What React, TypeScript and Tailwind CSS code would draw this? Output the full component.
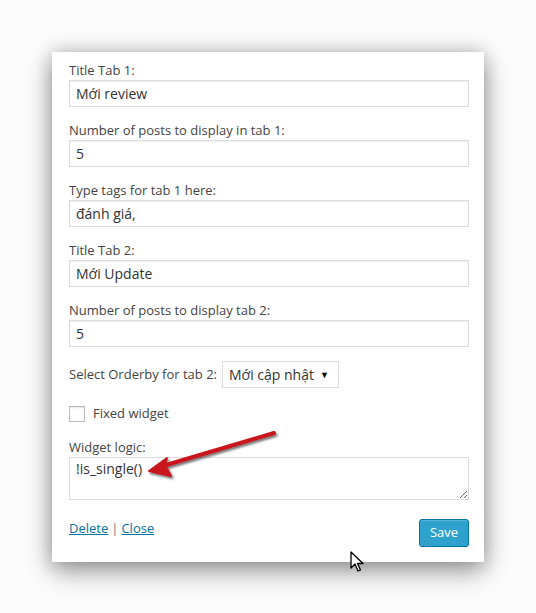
import React from "react";

const font = { fontFamily: '"Open Sans", "Noto Sans", sans-serif' };

function Field({ label, value }: { label: string; value: string }) {
  return (
    <div className="mb-[14px]">
      <div className="mb-[1px] text-[13px] leading-[18px] text-[#444]">{label}</div>
      <div className="flex h-[27px] items-center border border-[#ddd] px-[6px] text-[14px] text-[#333] shadow-[inset_0_1px_2px_rgba(0,0,0,0.07)]">
        {value}
      </div>
    </div>
  );
}

function RedArrow() {
  return (
    <svg
      className="pointer-events-none absolute left-[140px] top-[424px]"
      width="145"
      height="60"
      viewBox="0 0 145 60"
    >
      <defs>
        <filter id="sh" x="-20%" y="-40%" width="140%" height="180%">
          <feDropShadow dx="1.5" dy="2" stdDeviation="1.2" floodColor="#000" floodOpacity="0.55" />
        </filter>
      </defs>
      <g filter="url(#sh)">
        <path d="M134 9 L26 41" stroke="#c8141e" strokeWidth="4" strokeLinecap="round" />
        <path d="M9 47 L27 34 L25 41 L31 52 Z" fill="#c8141e" stroke="#c8141e" strokeWidth="2" strokeLinejoin="round" />
      </g>
    </svg>
  );
}

function Cursor() {
  return (
    <svg className="pointer-events-none absolute left-[350px] top-[551px]" width="14" height="22" viewBox="0 0 14 22">
      <path
        d="M1 1 L1 17 L5 13 L8 20 L10.5 19 L7.5 12.5 L13 12.5 Z"
        fill="#fff"
        stroke="#000"
        strokeWidth="1.3"
        strokeLinejoin="round"
      />
    </svg>
  );
}

export default function App() {
  return (
    <div className="relative h-[613px] w-[536px] overflow-hidden bg-[#fcfcfc]" style={font}>
      <div className="pl-[52px] pt-[52px]">
        <div className="w-[432px] bg-white pb-[15px] pl-[17px] pr-[15px] pt-[9px] shadow-[0_0_18px_rgba(0,0,0,0.22),0_10px_24px_rgba(0,0,0,0.35)]">
          <Field label="Title Tab 1:" value="Mới review" />
          <Field label="Number of posts to display in tab 1:" value="5" />
          <Field label="Type tags for tab 1 here:" value="đánh giá," />
          <Field label="Title Tab 2:" value="Mới Update" />
          <Field label="Number of posts to display tab 2:" value="5" />

          {/* orderby */}
          <div className="flex items-center gap-[5px]">
            <span className="text-[13px] text-[#444]">Select Orderby for tab 2:</span>
            <div className="flex h-[27px] w-[117px] items-center justify-between border border-[#ddd] pl-[6px] pr-[9px] text-[14px] text-[#333]">
              <span>Mới cập nhật</span>
              <span className="text-[9px] text-black">▼</span>
            </div>
          </div>

          {/* checkbox */}
          <div className="mt-[16px] flex items-center gap-[8px]">
            <div className="h-[16px] w-[16px] border border-[#bbb] shadow-[inset_0_1px_2px_rgba(0,0,0,0.1)]" />
            <span className="text-[13px] text-[#444]">Fixed widget</span>
          </div>

          {/* widget logic */}
          <div className="mt-[14px]">
            <div className="mb-[1px] text-[13px] leading-[18px] text-[#444]">Widget logic:</div>
            <textarea
              defaultValue="!is_single()"
              className="block h-[43px] w-full border border-[#ddd] px-[6px] pt-[1px] text-[14px] leading-[20px] text-[#333] outline-none"
              style={font}
            />
          </div>

          {/* footer */}
          <div className="mt-[19px] flex items-start justify-between">
            <div className="text-[13px] text-[#555]">
              <a className="text-[#0074a2] underline">Delete</a>
              <span className="mx-[3px] text-[#777]">|</span>
              <a className="text-[#0074a2] underline">Close</a>
            </div>
            <button className="h-[28px] w-[50px] rounded-[3px] border border-[#0074a2] bg-[#2ea2cc] text-[13px] text-white shadow-[inset_0_1px_0_rgba(120,200,230,0.5)]">
              Save
            </button>
          </div>
        </div>
      </div>
      <RedArrow />
      <Cursor />
    </div>
  );
}
